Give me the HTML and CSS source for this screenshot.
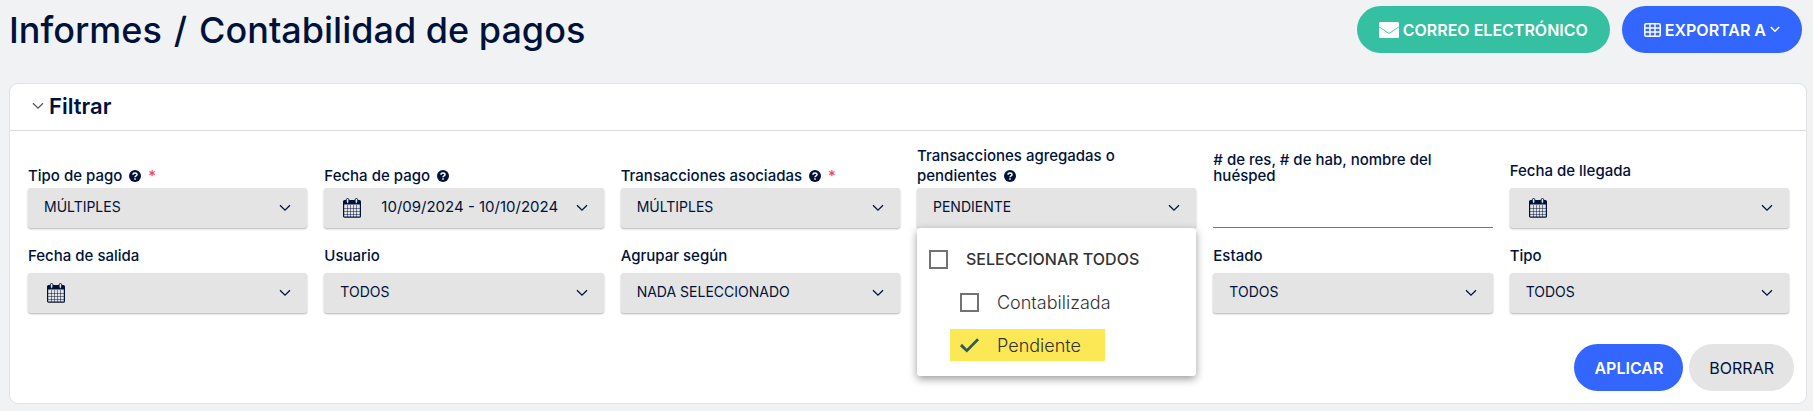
FILE: index.html
```html
<!DOCTYPE html>
<html lang="es">
<head>
  <meta charset="UTF-8">
  <title>Informes / Contabilidad de pagos</title>
  <link rel="stylesheet" href="styles.css">
</head>
<body>

  <!-- shared icons -->
  <svg class="sprite" aria-hidden="true">
    <symbol id="chevron" viewBox="0 0 12 8">
      <path d="M1 1.2l5 5 5-5" fill="none" stroke="currentColor" stroke-width="1.3"/>
    </symbol>
    <symbol id="calendar" viewBox="0 0 18 20">
      <path d="M1 2.5h16v4H1z" fill="currentColor"/>
      <rect x=".6" y="2.6" width="16.8" height="16.6" rx="1" fill="none" stroke="currentColor" stroke-width="1.2"/>
      <path d="M4.5 7v12M7.5 7v12M10.5 7v12M13.5 7v12M1 10.5h16M1 13.5h16M1 16.5h16" fill="none" stroke="currentColor" stroke-width=".5"/>
      <rect x="3.3" y=".5" width="2.6" height="4.8" rx="1.3" fill="#e4e4e4" stroke="currentColor" stroke-width=".9"/>
      <rect x="12.1" y=".5" width="2.6" height="4.8" rx="1.3" fill="#e4e4e4" stroke="currentColor" stroke-width=".9"/>
    </symbol>
    <symbol id="help" viewBox="0 0 12 12">
      <circle cx="6" cy="6" r="6" fill="currentColor"/>
      <path d="M4 4.7C4 2.4 8 2.4 8 4.7 8 6 6 5.9 6 7.3" fill="none" stroke="#fff" stroke-width="1.5"/>
      <path d="M5.2 8.2h1.6v1.5H5.2z" fill="#fff"/>
    </symbol>
  </svg>

  <header class="page-header">
    <h1><span>Informes</span> <span>/</span> <span>Contabilidad de pagos</span></h1>
    <div class="header-actions">
      <button type="button" class="btn btn-green">
        <svg width="20" height="16" viewBox="0 0 20 16" aria-hidden="true">
          <path d="M1.500 0h17A1.500 1.500 0 0 1 20 1.500v3L10.800 10.400a1.300 1.300 0 0 1-1.600 0L0 4.500V1.500A1.500 1.500 0 0 1 1.500 0z" fill="#fff"/>
          <path d="M0 5.300l8.800 6a2 2 0 0 0 2.400 0l8.800-6v9.200a1.500 1.500 0 0 1-1.500 1.500h-17A1.500 1.500 0 0 1 0 14.500z" fill="#fff"/>
        </svg>
        CORREO ELECTRÓNICO
      </button>
      <button type="button" class="btn btn-blue">
        <svg width="17" height="14" viewBox="0 0 17 14" aria-hidden="true">
          <rect x=".8" y=".8" width="15.400" height="12.400" rx="1.200" fill="none" stroke="#fff" stroke-width="1.500"/>
          <path d="M1 5h15M1 9h15M6 1v12M11 1v12" stroke="#fff" stroke-width="1.400"/>
        </svg>
        EXPORTAR A
        <svg width="10" height="7" viewBox="0 0 10 7" aria-hidden="true"><path d="M.8 1L5 5.200 9.200 1" fill="none" stroke="#fff" stroke-width="1.600"/></svg>
      </button>
    </div>
  </header>

  <section class="card">
    <h2 class="card-title"><svg class="chevron"><use href="#chevron"/></svg>Filtrar</h2>

    <form class="filters">
      <div class="field">
        <label for="paymentType">Tipo de pago <svg class="help"><use href="#help"/></svg> <span class="required">*</span></label>
        <div class="control">
          <select id="paymentType"><option>MÚLTIPLES</option></select>
          <svg class="chevron"><use href="#chevron"/></svg>
        </div>
      </div>

      <div class="field">
        <label for="paymentDate">Fecha de pago <svg class="help"><use href="#help"/></svg></label>
        <div class="control date">
          <select id="paymentDate"><option>10/09/2024 - 10/10/2024</option></select>
          <svg class="calendar"><use href="#calendar"/></svg>
          <svg class="chevron"><use href="#chevron"/></svg>
        </div>
      </div>

      <div class="field">
        <label for="associated">Transacciones asociadas <svg class="help"><use href="#help"/></svg> <span class="required">*</span></label>
        <div class="control">
          <select id="associated"><option>MÚLTIPLES</option></select>
          <svg class="chevron"><use href="#chevron"/></svg>
        </div>
      </div>

      <div class="field">
        <label for="pending">Transacciones agregadas o<br>pendientes <svg class="help"><use href="#help"/></svg></label>
        <div class="control">
          <select id="pending"><option>PENDIENTE</option></select>
          <svg class="chevron"><use href="#chevron"/></svg>
          <div class="menu">
            <label class="menu-item all"><input type="checkbox">SELECCIONAR TODOS</label>
            <label class="menu-item"><input type="checkbox">Contabilizada</label>
            <label class="menu-item selected"><input type="checkbox" checked>Pendiente</label>
          </div>
        </div>
      </div>

      <div class="field">
        <label for="search" class="tight"># de res, # de hab, nombre del huésped</label>
        <input type="text" id="search" class="text-input">
      </div>

      <div class="field">
        <label for="arrival" class="raised">Fecha de llegada</label>
        <div class="control date">
          <select id="arrival"><option></option></select>
          <svg class="calendar"><use href="#calendar"/></svg>
          <svg class="chevron"><use href="#chevron"/></svg>
        </div>
      </div>

      <div class="field">
        <label for="departure" class="raised">Fecha de salida</label>
        <div class="control date">
          <select id="departure"><option></option></select>
          <svg class="calendar"><use href="#calendar"/></svg>
          <svg class="chevron"><use href="#chevron"/></svg>
        </div>
      </div>

      <div class="field">
        <label for="user" class="raised">Usuario</label>
        <div class="control">
          <select id="user"><option>TODOS</option></select>
          <svg class="chevron"><use href="#chevron"/></svg>
        </div>
      </div>

      <div class="field">
        <label for="groupBy" class="raised">Agrupar según</label>
        <div class="control">
          <select id="groupBy"><option>NADA SELECCIONADO</option></select>
          <svg class="chevron"><use href="#chevron"/></svg>
        </div>
      </div>

      <div class="field after-menu">
        <label for="status" class="raised">Estado</label>
        <div class="control">
          <select id="status"><option>TODOS</option></select>
          <svg class="chevron"><use href="#chevron"/></svg>
        </div>
      </div>

      <div class="field">
        <label for="type" class="raised">Tipo</label>
        <div class="control">
          <select id="type"><option>TODOS</option></select>
          <svg class="chevron"><use href="#chevron"/></svg>
        </div>
      </div>

      <div class="form-actions">
        <button type="submit" class="btn btn-blue">APLICAR</button>
        <button type="reset" class="btn btn-grey">BORRAR</button>
      </div>
    </form>
  </section>

</body>
</html>
```
FILE: styles.css
```css
* {
  box-sizing: border-box;
}

body {
  margin: 0;
  padding: 6px 6px 6px 9px;
  background: #f1f2f4;
  color: #00123a;
  font-family: Inter, "Open Sans", sans-serif;
  font-size: 15px;
}

.sprite {
  display: none;
}

.page-header {
  display: flex;
  justify-content: space-between;
  align-items: center;
  padding-right: 5px;
  margin-bottom: 30px;
}

h1 {
  display: flex;
  gap: 12px;
  margin: 0;
  font-size: 36px;
  font-weight: 500;
  line-height: 46px;
}

.header-actions {
  display: flex;
  gap: 12px;
}

/* buttons */
.btn {
  display: flex;
  align-items: center;
  gap: 4px;
  height: 47px;
  padding: 0 20px;
  border: none;
  border-radius: 24px;
  color: #fff;
  font-family: inherit;
  font-size: 16px;
  font-weight: 600;
  cursor: pointer;
}

.header-actions .btn {
  padding: 0 22px;
}

.btn-green {
  background: #34c0a1;
}

.btn-blue {
  background: #3366ff;
}

.btn-grey {
  background: #e4e4e4;
  color: #00123a;
  font-weight: 400;
}

/* filter card */
.card {
  background: #fff;
  border: 1px solid #e0e2e5;
  border-radius: 9px;
}

.card-title {
  display: flex;
  align-items: center;
  gap: 5px;
  margin: 0;
  padding: 0 17px 2px 22px;
  border-bottom: 1px solid #d9dadc;
  font-size: 22px;
  font-weight: 600;
  line-height: 44px;
}

.card-title .chevron {
  color: #555;
}

.filters {
  display: grid;
  grid-template-columns: repeat(6, 1fr);
  column-gap: 17px;
  row-gap: 18px;
  padding: 15px 17px 12px 18px;
}

.field {
  display: flex;
  flex-direction: column;
  justify-content: flex-end;
}

.field > label {
  padding-bottom: 2px;
  font-weight: 500;
  line-height: 20px;
}

.field > .tight {
  padding-bottom: 4px;
  line-height: 16px;
}

.field > .raised {
  padding-bottom: 7px;
}

.after-menu {
  grid-column: 5;
}

.help {
  width: 12px;
  height: 12px;
  margin: 0 3px;
  vertical-align: -1px;
}

.required {
  color: #f4474f;
}

.control {
  display: grid;
  align-items: center;
  position: relative;
}

.control > select,
.control > svg {
  grid-area: 1 / 1;
}

.control > svg {
  pointer-events: none;
}

select {
  appearance: none;
  width: 100%;
  height: 40px;
  padding: 0 36px 3px 16px;
  border: none;
  border-radius: 3px;
  background: #e4e4e4;
  box-shadow: 0 1px 2px rgba(0, 0, 0, 0.3);
  color: #00123a;
  font-family: inherit;
  font-size: 14px;
}

.date select {
  padding-left: 57px;
  font-size: 15px;
}

.chevron {
  width: 12px;
  height: 8px;
}

.control .chevron {
  justify-self: end;
  margin-right: 16px;
}

.calendar {
  width: 18px;
  height: 20px;
  margin-left: 19px;
}

.text-input {
  width: 100%;
  height: 40px;
  border: none;
  border-bottom: 1px solid #777;
  background: transparent;
  font: inherit;
}

/* open drop-down list */
.menu {
  position: absolute;
  top: 40px;
  left: 0;
  right: 0;
  z-index: 1;
  display: flex;
  flex-direction: column;
  align-items: flex-start;
  gap: 11px;
  padding: 15px 12px;
  border-radius: 3px;
  background: #fff;
  box-shadow: 0 3px 8px rgba(0, 0, 0, 0.4);
}

.menu-item {
  display: flex;
  align-items: center;
  gap: 18px;
  height: 32px;
  margin-left: 21px;
  padding: 0 24px 0 10px;
  color: #333;
  font-size: 18px;
  font-weight: 300;
}

.menu-item.all {
  margin-left: 0;
  padding: 0;
  font-size: 16px;
  font-weight: 500;
}

.menu-item.selected {
  background: #fce855;
}

.menu-item input {
  appearance: none;
  width: 19px;
  height: 19px;
  margin: 0;
  border: 2px solid #737373;
}

.menu-item input:checked {
  border: none;
  background: #2b5c56;
  clip-path: polygon(0 56%, 10% 44%, 36% 70%, 90% 15%, 100% 25%, 36% 90%);
}

.form-actions {
  grid-column: 1 / -1;
  display: flex;
  justify-content: flex-end;
  gap: 6px;
  margin-top: 13px;
  margin-right: -5px;
}
```
